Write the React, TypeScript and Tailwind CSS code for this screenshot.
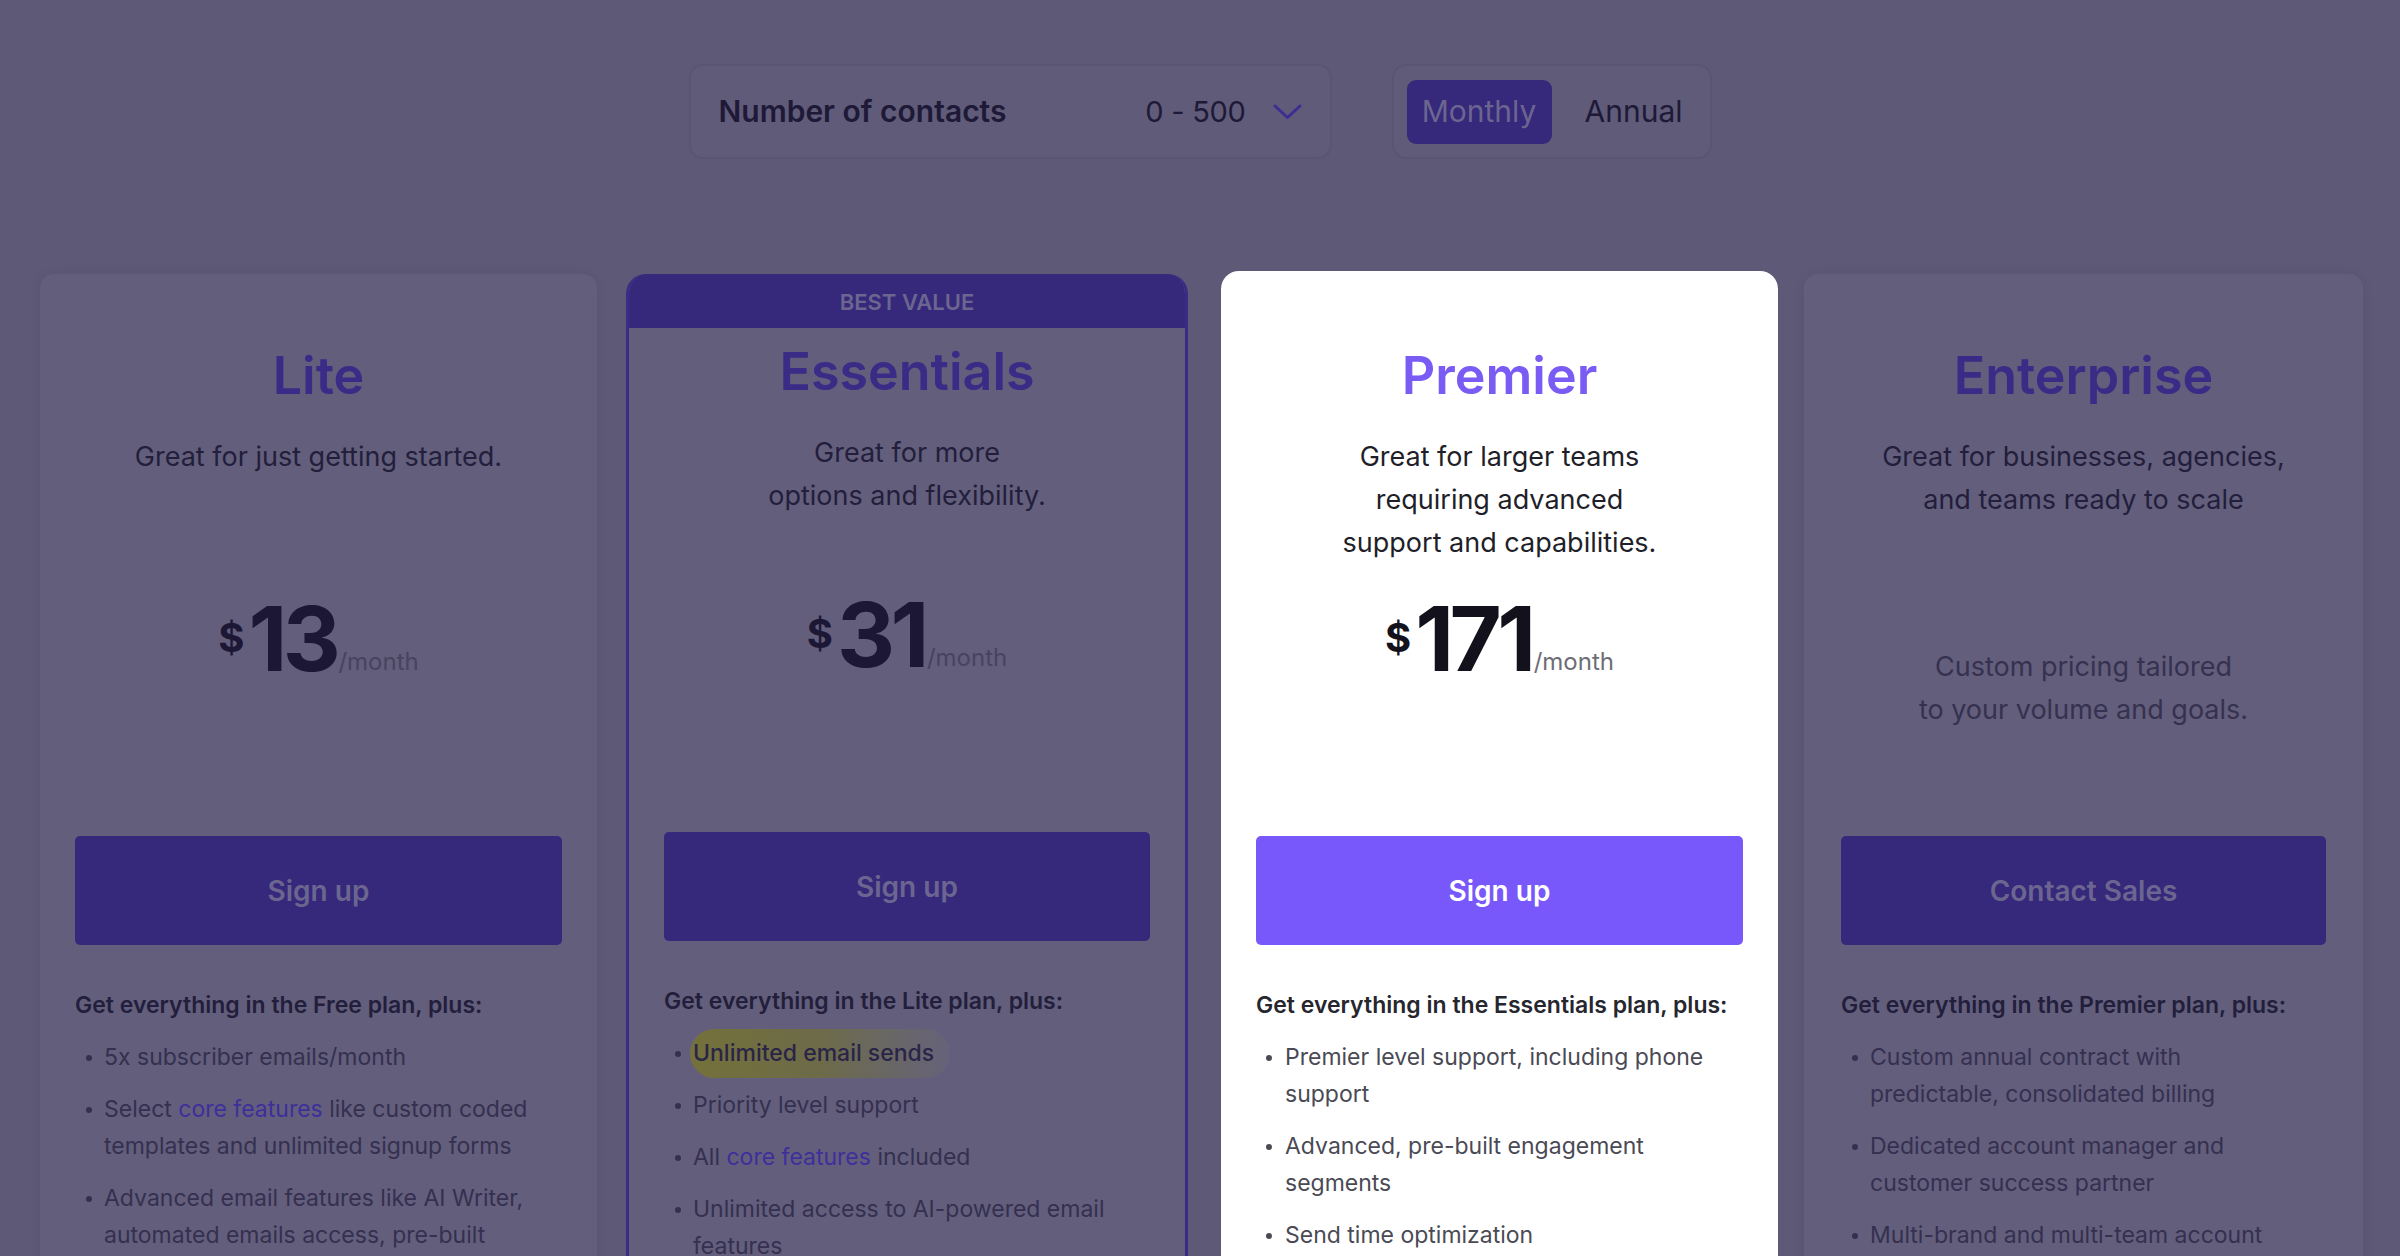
import React from "react";

type Item = { content: React.ReactNode; highlight?: boolean };

function Dot({ premier }: { premier?: boolean }) {
  return (
    <span
      className={
        premier
          ? "mt-[16px] ml-[10px] mr-[13px] h-[6px] w-[6px] shrink-0 rounded-full bg-[#4a4a55]"
          : "mt-[16px] ml-[11px] mr-[12px] h-[6px] w-[6px] shrink-0 rounded-full bg-[#35304f]"
      }
    />
  );
}

function FeatureList({ items, premier }: { items: Item[]; premier?: boolean }) {
  return (
    <ul
      className={
        premier
          ? "mt-[15px] flex flex-col gap-[15px] text-[23px] leading-[37px] text-[#4a4a55]"
          : "mt-[15px] flex flex-col gap-[15px] text-[23px] leading-[37px] text-[#35304f]"
      }
    >
      {items.map((it, i) => (
        <li key={i} className="flex items-start">
          <Dot premier={premier} />
          {it.highlight ? (
            <span className="-my-[6px] -ml-[3px] rounded-full bg-linear-to-r from-[#74713a] via-[#6d6b48] to-[#66627a] py-[6px] pl-[3px] pr-[16px] font-medium text-[#2a2548]">
              {it.content}
            </span>
          ) : (
            <span>{it.content}</span>
          )}
        </li>
      ))}
    </ul>
  );
}

function Link({ children, premier }: { children: React.ReactNode; premier?: boolean }) {
  return <span className={premier ? "text-[#7857fb]" : "text-[#3e2f9a]"}>{children}</span>;
}

function Price({ value, premier }: { value: string; premier?: boolean }) {
  return (
    <div className="flex items-start justify-center">
      <span
        className={
          premier
            ? "mt-[24px] text-[40px] font-bold leading-[40px] text-[#13121c]"
            : "mt-[24px] text-[40px] font-bold leading-[40px] text-[#1b1735]"
        }
      >
        $
      </span>
      <span
        className={
          premier
            ? "ml-[4px] text-[90px] font-bold leading-[90px] tracking-[-0.05em] text-[#13121c]"
            : "ml-[4px] text-[90px] font-bold leading-[90px] tracking-[-0.05em] text-[#1b1735]"
        }
      >
        {value}
      </span>
      <span
        className={
          premier
            ? "mt-[56px] ml-[2px] text-[24px] leading-[24px] text-[#6d6d77]"
            : "mt-[56px] ml-[2px] text-[24px] leading-[24px] text-[#48435f]"
        }
      >
        /month
      </span>
    </div>
  );
}

export default function App() {
  return (
    <div className="h-[1256px] w-full overflow-hidden bg-[#5d5977] font-[Inter,'Liberation_Sans',sans-serif]">
      {/* Top controls */}
      <div className="flex justify-center gap-[60px] pt-[64px]">
        <div className="flex h-[95px] w-[643px] items-center justify-between rounded-[14px] border-2 border-[#595572] bg-[#5f5b79] pl-[28px] pr-[28px]">
          <span className="text-[30px] font-semibold text-[#1d1937]">Number of contacts</span>
          <div className="flex items-center gap-[27px]">
            <span className="text-[29px] tracking-[-0.01em] text-[#1d1937]">0 - 500</span>
            <svg width="29" height="16" viewBox="0 0 29 16" fill="none">
              <polyline
                points="2,2 14.5,13.5 27,2"
                stroke="#3d2d92"
                strokeWidth="3"
                strokeLinecap="round"
                strokeLinejoin="round"
              />
            </svg>
          </div>
        </div>
        <div className="flex h-[95px] w-[320px] items-center rounded-[14px] border-2 border-[#595572] bg-[#5f5b79] px-[13px]">
          <div className="flex h-[64px] w-[145px] items-center justify-center rounded-[9px] bg-[#36287a] text-[30px] text-[#6b6690]">
            Monthly
          </div>
          <div className="flex h-[64px] flex-1 items-center justify-end pr-[14px] text-[30px] text-[#1d1937]">
            Annual
          </div>
        </div>
      </div>

      {/* Cards */}
      <div className="mt-[115px] flex items-start pl-[40px]">
        {/* Lite */}
        <div className="h-[1200px] w-[557px] shrink-0 rounded-[14px] bg-[#625e7c] px-[35px] pt-[70px] text-center shadow-[0_0_12px_rgba(40,30,70,0.07)]">
          <div className="text-[52px] font-semibold leading-[64px] text-[#3a2b86]">Lite</div>
          <div className="mt-[27px] h-[129px] text-[27px] leading-[43px] text-[#221e3b]">
            Great for just getting started.
          </div>
          <div className="mt-[30px] h-[242px]">
            <Price value="13" />
          </div>
          <div className="flex h-[109px] items-center justify-center rounded-[5px] bg-[#36287a] text-[28px] font-semibold text-[#6b6690]">
            Sign up
          </div>
          <div className="mt-[42px] text-left">
            <div className="text-[23px] font-semibold leading-[37px] text-[#221e3b]">
              Get everything in the Free plan, plus:
            </div>
            <FeatureList
              items={[
                { content: "5x subscriber emails/month" },
                {
                  content: (
                    <>
                      Select <Link>core features</Link> like custom coded
                      <br />
                      templates and unlimited signup forms
                    </>
                  ),
                },
                {
                  content: (
                    <>
                      Advanced email features like AI Writer,
                      <br />
                      automated emails access, pre-built
                      <br />
                      templates and segments
                    </>
                  ),
                },
              ]}
            />
          </div>
        </div>

        {/* Essentials */}
        <div className="ml-[29px] h-[1200px] w-[562px] shrink-0 overflow-hidden rounded-t-[20px] border-[3px] border-t-0 border-[#3a2c86] bg-[#625e7c] text-center">
          <div className="flex h-[54px] items-center justify-center bg-[#36287a] pt-[2px] text-[22px] font-semibold text-[#6b6690]">
            BEST VALUE
          </div>
          <div className="px-[35px] pt-[12px]">
            <div className="text-[52px] font-semibold leading-[64px] text-[#3a2b86]">Essentials</div>
            <div className="mt-[27px] h-[129px] text-[27px] leading-[43px] text-[#221e3b]">
              Great for more
              <br />
              options and flexibility.
            </div>
            <div className="mt-[30px] h-[242px]">
              <Price value="31" />
            </div>
            <div className="flex h-[109px] items-center justify-center rounded-[5px] bg-[#36287a] text-[28px] font-semibold text-[#6b6690]">
              Sign up
            </div>
            <div className="mt-[42px] text-left">
              <div className="text-[23px] font-semibold leading-[37px] text-[#221e3b]">
                Get everything in the Lite plan, plus:
              </div>
              <FeatureList
                items={[
                  { content: "Unlimited email sends", highlight: true },
                  { content: "Priority level support" },
                  {
                    content: (
                      <>
                        All <Link>core features</Link> included
                      </>
                    ),
                  },
                  {
                    content: (
                      <>
                        Unlimited access to AI-powered email
                        <br />
                        features
                      </>
                    ),
                  },
                ]}
              />
            </div>
          </div>
        </div>

        {/* Premier */}
        <div className="relative -mt-[3px] ml-[33px] h-[1200px] w-[557px] shrink-0 rounded-[18px] bg-white px-[35px] pt-[73px] text-center">
          <div className="text-[52px] font-semibold leading-[64px] text-[#7a5cf5]">Premier</div>
          <div className="mt-[27px] h-[129px] text-[27px] leading-[43px] text-[#1f1f29]">
            Great for larger teams
            <br />
            requiring advanced
            <br />
            support and capabilities.
          </div>
          <div className="mt-[30px] h-[242px]">
            <Price value="171" premier />
          </div>
          <div className="flex h-[109px] items-center justify-center rounded-[5px] bg-[#7857fb] text-[28px] font-semibold text-white">
            Sign up
          </div>
          <div className="mt-[42px] text-left">
            <div className="text-[23px] font-semibold leading-[37px] text-[#26262f]">
              Get everything in the Essentials plan, plus:
            </div>
            <FeatureList
              premier
              items={[
                {
                  content: (
                    <>
                      Premier level support, including phone
                      <br />
                      support
                    </>
                  ),
                },
                {
                  content: (
                    <>
                      Advanced, pre-built engagement
                      <br />
                      segments
                    </>
                  ),
                },
                { content: "Send time optimization" },
                { content: "Unlimited users" },
              ]}
            />
          </div>
        </div>

        {/* Enterprise */}
        <div className="ml-[26px] h-[1200px] w-[559px] shrink-0 rounded-[14px] bg-[#625e7c] px-[37px] pt-[70px] text-center shadow-[0_0_12px_rgba(40,30,70,0.07)]">
          <div className="text-[52px] font-semibold leading-[64px] text-[#3a2b86]">Enterprise</div>
          <div className="mt-[27px] h-[129px] text-[27px] leading-[43px] text-[#221e3b]">
            Great for businesses, agencies,
            <br />
            and teams ready to scale
          </div>
          <div className="mt-[30px] h-[242px] pt-[51px] text-[27px] leading-[43px] text-[#36314f]">
            Custom pricing tailored
            <br />
            to your volume and goals.
          </div>
          <div className="flex h-[109px] items-center justify-center rounded-[5px] bg-[#36287a] text-[28px] font-semibold text-[#6b6690]">
            Contact Sales
          </div>
          <div className="mt-[42px] text-left">
            <div className="text-[23px] font-semibold leading-[37px] text-[#221e3b]">
              Get everything in the Premier plan, plus:
            </div>
            <FeatureList
              items={[
                {
                  content: (
                    <>
                      Custom annual contract with
                      <br />
                      predictable, consolidated billing
                    </>
                  ),
                },
                {
                  content: (
                    <>
                      Dedicated account manager and
                      <br />
                      customer success partner
                    </>
                  ),
                },
                {
                  content: (
                    <>
                      Multi-brand and multi-team account
                      <br />
                      management
                    </>
                  ),
                },
              ]}
            />
          </div>
        </div>
      </div>
    </div>
  );
}
